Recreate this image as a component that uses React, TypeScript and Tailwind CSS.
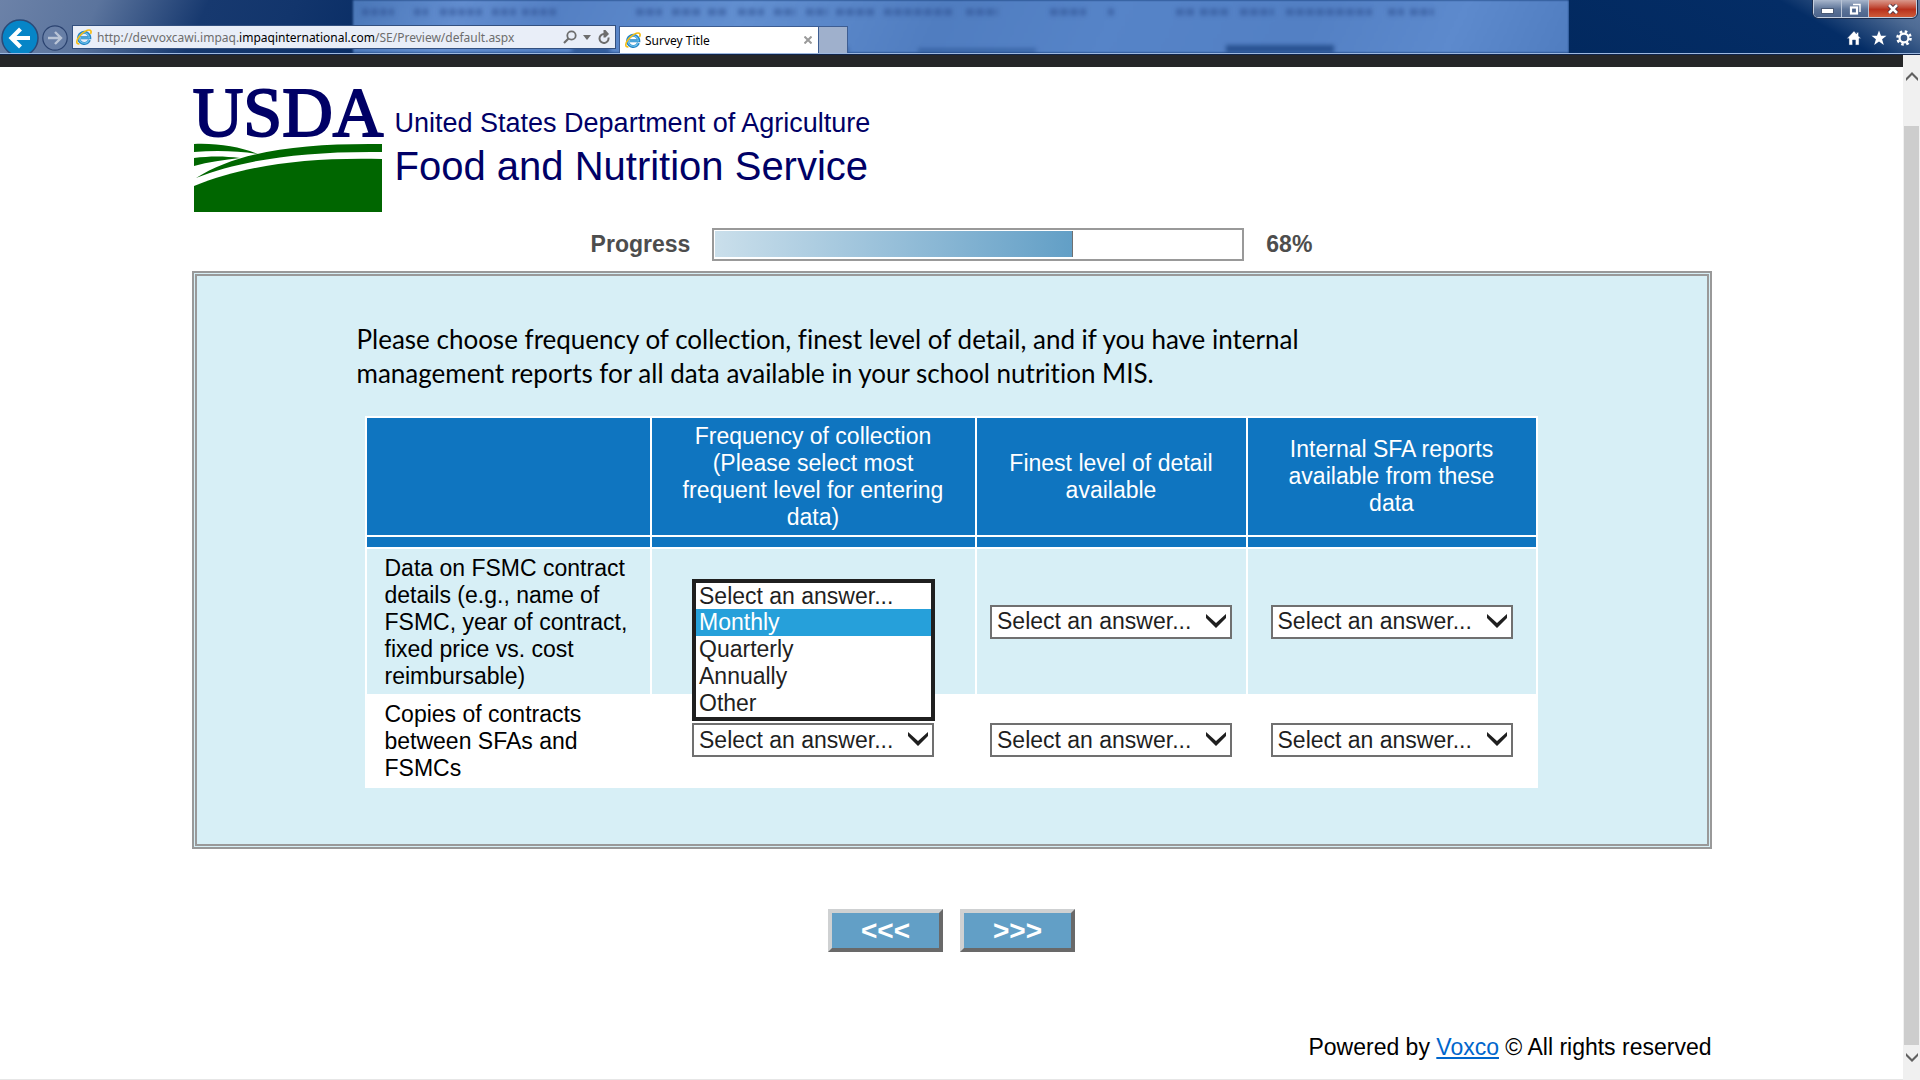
import { useState } from 'react';

const answers = ['Select an answer...', 'Monthly', 'Quarterly', 'Annually', 'Other'];

const columns = [
  'Frequency of collection (Please select most frequent level for entering data)',
  'Finest level of detail available',
  'Internal SFA reports available from these data',
];

const rows = [
  {
    label: 'Data on FSMC contract details (e.g., name of FSMC, year of contract, fixed price vs. cost reimbursable)',
    open: true,
  },
  { label: 'Copies of contracts between SFAs and FSMCs', open: false },
];

function IeIcon() {
  return (
    <svg viewBox="0 0 16 16" className="size-4 shrink-0" aria-hidden="true">
      <path d="M13.4 11a5.6 5.6 0 1 1 .4-2.200H4.600" fill="none" stroke="#2585c4" strokeWidth="3" />
      <path d="M13 11a5.200 5.200 0 1 1 .4-2H4.600" fill="none" stroke="#6ec3ee" strokeWidth="1.2" />
      <path
        d="M3.400 14.800C.2 15.400-.2 12 3 7.800 6.400 3 12 .2 14.200 1.200c1.200.6 1 2.200.3 3.600"
        fill="none"
        stroke="#f6bd12"
        strokeWidth="1.6"
      />
    </svg>
  );
}

// Desktop seen through the glass title bar
function GlassBackdrop() {
  return (
    <div className="absolute inset-0 overflow-hidden bg-[linear-gradient(115deg,#6c82a8_0,#5b749d_90px,#17396f_190px,#12356c_270px,#022760_420px)]">
      <div className="absolute inset-y-0 left-[18.4%] right-[18.3%] bg-[linear-gradient(115deg,#4a77b8_0%,#628dcf_9%,#5480c4_17%,#628fd0_32%,#507dc0_48%,#5684c8_62%,#5380c4_78%,#5d8acd_90%,#507dc0_100%)] blur-[1px]" />
      <div className="absolute inset-y-0 right-0 w-[18.3%] bg-[linear-gradient(30deg,#02295f_0%,#042d66_68%,#4e6b94_88%,#5f7ba3_100%)]" />
      <svg className="absolute inset-0 h-full w-full blur-[2px]" aria-hidden="true">
        <g stroke="#2c4f90" strokeWidth="7" opacity="0.5">
          <path d="M362 12h32M414 12h14M440 12h42M492 12h24M522 12h36" strokeDasharray="7 2" />
          <path d="M636 12h26M672 12h28M708 12h20M738 12h26M774 12h22M806 12h22M836 12h38M884 12h70M966 12h32" strokeDasharray="8 2" />
          <path d="M1050 12h36M1108 12h6M1176 12h18M1200 12h28M1240 12h34M1286 12h86M1388 12h16M1410 12h24" strokeDasharray="8 2" />
        </g>
        <g stroke="#173f7c" strokeWidth="7" opacity="0.7">
          <path d="M572 51h38M824 51h24" />
          <path d="M918 52h118" opacity="0.6" />
          <path d="M1226 50h108" strokeWidth="10" />
        </g>
      </svg>
    </div>
  );
}

function BrowserBar() {
  return (
    <header className="relative flex h-[54px] items-end border-b border-[#9db8e0]">
      <GlassBackdrop />
      <div className="relative flex h-full w-full items-end">
        <div className="flex h-full w-[619px] shrink-0 items-end overflow-hidden">
          <button aria-label="Back" className="-mb-1 ml-px size-[38px] shrink-0">
            <svg viewBox="0 0 38 38" className="size-full">
              <circle cx="19" cy="19" r="18" fill="#0685c7" stroke="#2b4a78" strokeWidth="1.5" />
              <path d="M29 19H12M19.500 10l-9 9 9 9" fill="none" stroke="#fff" strokeWidth="4.2" />
            </svg>
          </button>
          <button aria-label="Forward" className="mb-[2px] ml-[3px] size-[26px] shrink-0">
            <svg viewBox="0 0 26 26" className="size-full">
              <circle cx="13" cy="13" r="12.2" fill="#7f93b5" fillOpacity="0.3" stroke="#2b4370" strokeWidth="1.2" />
              <path d="M6 13h12M13 7l6 6-6 6" fill="none" stroke="#b9c4d6" strokeWidth="2.4" />
            </svg>
          </button>
          <form className="mb-1 ml-1 flex h-6 w-[544px] items-center border border-[#33507f] bg-[#e9eef8] pl-[3px] pr-1">
            <IeIcon />
            <div
              role="textbox"
              aria-label="Address"
              className="ml-[5px] flex-1 pt-[2px] font-['Noto_Sans','Segoe_UI',sans-serif] text-xs text-[#6d6d6d]"
            >
              http://devvoxcawi.impaq.<span className="text-black">impaqinternational.com</span>/SE/Preview/default.aspx
            </div>
            <button type="button" aria-label="Search">
              <svg viewBox="0 0 14 14" className="size-[14px]">
                <circle cx="8.5" cy="5.5" r="4.2" fill="none" stroke="#6d6d6d" strokeWidth="1.8" />
                <path d="M5.500 8.500 1 13" stroke="#6d6d6d" strokeWidth="2.2" />
              </svg>
            </button>
            <button type="button" aria-label="Search options" className="ml-[6px]">
              <svg viewBox="0 0 8 5" className="h-[5px] w-2">
                <path d="M0 0h8L4 5z" fill="#6d6d6d" />
              </svg>
            </button>
            <button type="button" aria-label="Refresh" className="ml-[6px]">
              <svg viewBox="0 0 14 14" className="size-[14px]">
                <path d="M11.400 7.500A4.500 4.500 0 1 1 7 4h1.500" fill="none" stroke="#6d6d6d" strokeWidth="2" />
                <path d="M6.500 0H8.500l3.500 4-3.500 3.500h-2z" fill="#6d6d6d" />
              </svg>
            </button>
          </form>
        </div>

        <div className="flex h-[27px] w-[200px] items-center border border-b-0 border-[#3d5d92] bg-white pl-[5px] pr-[6px]">
          <IeIcon />
          <span className="ml-1 flex-1 pt-px font-['Noto_Sans','Segoe_UI',sans-serif] text-xs text-black">Survey Title</span>
          <button aria-label="Close tab">
            <svg viewBox="0 0 8 8" className="size-2">
              <path d="M.5.5l7 7M7.500.5l-7 7" stroke="#9a9a9a" strokeWidth="2" />
            </svg>
          </button>
        </div>
        <button aria-label="New tab" className="h-[27px] w-[29px] border border-b-0 border-l-0 border-[#3d5d92] bg-[#9fb0cc]" />

        <div className="ml-auto flex h-full flex-col items-end justify-between pb-[7px]">
          <div className="mr-[3px] flex h-[18px] overflow-hidden rounded-b-[5px] border border-t-0 border-[#c5cfdf] outline outline-[#1c2f50]">
            <button
              aria-label="Minimize"
              className="flex w-[28px] items-end justify-center border-r border-[#b9c4d6] bg-linear-to-b from-[#a8b6cc] via-[#5c7397] via-55% to-[#4c648c] pb-1"
            >
              <span className="h-1 w-[11px] bg-white outline outline-[#4a5a76]" />
            </button>
            <button
              aria-label="Restore"
              className="flex w-[27px] items-center justify-center border-r border-[#b9c4d6] bg-linear-to-b from-[#a8b6cc] via-[#5c7397] via-55% to-[#4c648c]"
            >
              <svg viewBox="0 0 12 12" className="size-3">
                <path d="M4 1.500h7V9" fill="none" stroke="#fff" strokeWidth="1.4" />
                <rect x="2" y="4.5" width="6" height="6" fill="#4c648c" stroke="#fff" strokeWidth="2.2" />
              </svg>
            </button>
            <button
              aria-label="Close"
              className="flex w-[47px] items-center justify-center bg-linear-to-b from-[#d9988c] via-[#b8301c] via-55% to-[#cf5a38]"
            >
              <svg viewBox="0 0 12 10" className="h-[10px] w-3">
                <path d="M2 1l8 8M10 1L2 9" stroke="#4b3040" strokeWidth="4.4" />
                <path d="M2 1l8 8M10 1L2 9" stroke="#fff" strokeWidth="2.6" />
              </svg>
            </button>
          </div>
          <div className="mr-2 flex gap-[9px]">
            <button aria-label="Home">
              <svg viewBox="0 0 16 16" className="size-4">
                <path d="M8 1 1 8.500h2V15h3.500v-5h3v5H13V8.500h2L12.500 6V2.500h-2V4z" fill="#fff" stroke="#33507f" strokeWidth="0.5" />
              </svg>
            </button>
            <button aria-label="Favorites">
              <svg viewBox="0 0 16 16" className="size-4">
                <path d="M8 .5l2 5.200h5.500l-4.400 3.500 1.700 5.800L8 11.600 3.200 15l1.700-5.800L.5 5.700H6z" fill="#fff" />
              </svg>
            </button>
            <button aria-label="Tools">
              <svg viewBox="0 0 16 16" className="size-4">
                <circle cx="8" cy="8" r="6.5" fill="none" stroke="#fff" strokeWidth="2.6" strokeDasharray="2.55 2.55" />
                <circle cx="8" cy="8" r="4.4" fill="none" stroke="#fff" strokeWidth="2.2" />
              </svg>
            </button>
          </div>
        </div>
      </div>
    </header>
  );
}

function UsdaLogo() {
  return (
    <svg viewBox="0 0 192 136" className="h-[136px] w-[192px] shrink-0 overflow-visible" role="img" aria-label="USDA">
      <text
        x="96"
        y="58"
        textAnchor="middle"
        fill="#000066"
        stroke="#000066"
        strokeWidth="2"
        className="font-['Liberation_Serif','Times_New_Roman',serif] text-[70px]"
      >
        USDA
      </text>
      <path d="M2 66c24-1 46 3 64 10-18-3-42-4-64-2z" fill="#006600" />
      <path d="M2 80c16-2 30-2 46 0-16 2-32 4-46 8z" fill="#006600" />
      <path d="M4 100C46 73 110 65 190 66v8C110 73 50 82 4 100z" fill="#006600" />
      <path d="M2 108c48-20 110-29 188-27v53H2z" fill="#006600" />
    </svg>
  );
}

function AnswerSelect({ label }: { label: string }) {
  return (
    <div className="relative mx-auto w-[242px]">
      <select
        aria-label={label}
        className="block h-[34px] w-full appearance-none border-2 border-[#707070] bg-white pl-[5px] text-[23px] leading-[27px] text-[#1f1f1f]"
      >
        {answers.map((answer) => (
          <option key={answer}>{answer}</option>
        ))}
      </select>
      <svg viewBox="0 0 20 14" className="pointer-events-none absolute right-[6px] top-[9px] h-[14px] w-5" aria-hidden="true">
        <path d="M0 0l10 9L20 0v4L10 14 0 4z" fill="#1f1f1f" />
      </svg>
    </div>
  );
}

function OpenSelect({ label }: { label: string }) {
  const [selected, setSelected] = useState('Monthly');

  return (
    <div className="relative mx-auto h-[34px] w-[242px]">
      <ul
        role="listbox"
        aria-label={label}
        className="absolute -top-[26px] left-0 z-10 w-[243px] border-4 border-[#1f1f1f] bg-white text-left text-[#1f1f1f]"
      >
        {answers.map((answer) => (
          <li
            key={answer}
            role="option"
            aria-selected={answer === selected}
            onClick={() => setSelected(answer)}
            className={`pl-[3px] first:h-[26px] ${answer === selected ? 'bg-[#26a0da] text-white' : ''}`}
          >
            {answer}
          </li>
        ))}
      </ul>
    </div>
  );
}

function SurveyTable() {
  return (
    <table className="ml-[168px] w-[1173px] table-fixed border-separate border-spacing-x-[2px] border-spacing-y-0 border-y-2 border-white bg-white">
      <colgroup>
        <col className="w-[283px]" />
        <col className="w-[323px]" />
        <col className="w-[269px]" />
        <col />
      </colgroup>
      <thead>
        <tr className="h-[119px] text-white">
          <td className="border-b-2 border-white bg-[#0f75c0]" />
          {columns.map((column) => (
            <th key={column} scope="col" className="border-b-2 border-white bg-[#0f75c0] px-7 font-normal">
              {column}
            </th>
          ))}
        </tr>
        <tr className="h-3" aria-hidden="true">
          {[0, 1, 2, 3].map((i) => (
            <td key={i} className="border-b-2 border-white bg-[#0f75c0]" />
          ))}
        </tr>
      </thead>
      <tbody>
        {rows.map((row) => (
          <tr key={row.label} className="bg-[#d7eff6] even:bg-white even:h-[92px]">
            <th scope="row" className="pb-1 pl-[18px] pr-4 pt-[6px] text-left font-normal">
              {row.label}
            </th>
            {columns.map((column, i) => (
              <td key={column}>
                {row.open && i === 0 ? <OpenSelect label={column} /> : <AnswerSelect label={`${row.label}: ${column}`} />}
              </td>
            ))}
          </tr>
        ))}
      </tbody>
    </table>
  );
}

function Scrollbar() {
  return (
    <div className="flex w-[17px] shrink-0 flex-col items-center bg-[#f0f0f0]" aria-hidden="true">
      <svg viewBox="0 0 12 10" className="mt-4 h-[10px] w-3">
        <path d="M0 7l6-6 6 6v3L6 4l-6 6z" fill="#606060" />
      </svg>
      <div className="mt-[45px] w-[15px] flex-1 bg-[#cdcdcd]" />
      <svg viewBox="0 0 12 10" className="mb-[17px] mt-2 h-[10px] w-3">
        <path d="M0 3l6 6 6-6V0L6 6 0 0z" fill="#606060" />
      </svg>
    </div>
  );
}

export default function App() {
  const progress = 68;

  return (
    <div className="flex min-h-screen flex-col bg-white font-['Liberation_Sans',Arial,sans-serif] text-[23px] leading-[27px] text-black">
      <BrowserBar />
      <div className="flex flex-1 border-t border-[#10244a]">
        <div className="min-w-0 flex-1 border-b border-[#e6e6e6]">
          <div className="h-3 bg-[#252628]" />

          <main className="mx-auto w-[1520px] max-w-full">
            <div className="flex pt-[11px] text-[#000066]">
              <UsdaLogo />
              <div className="ml-[11px] pt-[30px]">
                <p className="text-[27px] leading-[30px]">United States Department of Agriculture</p>
                <p className="mt-[5px] text-[40px] leading-[46px]">Food and Nutrition Service</p>
              </div>
            </div>

            <div className="mt-[14px] flex items-center justify-center font-bold text-[#4d4d4d]">
              <span id="progress-label">Progress</span>
              <div
                role="progressbar"
                aria-labelledby="progress-label"
                aria-valuenow={progress}
                className="mx-[22px] h-[33px] w-[532px] border-2 border-[#999999] p-px"
              >
                <div
                  className="h-[26px] border-r border-[#707070] bg-linear-to-r from-[#cadfeb] to-[#629fc6]"
                  style={{ width: `${progress}%` }}
                />
              </div>
              <span>{progress}%</span>
            </div>

            <section className="mt-[10px] border-[5px] border-double border-[#999999] bg-[#d7eff6] pb-[56px] pt-[46px]">
              <p className="mb-[26px] ml-[160px] w-[1000px] font-[Lato,Carlito,Calibri,sans-serif] text-[26px] leading-[34px] [font-variant-ligatures:none]">
                Please choose frequency of collection, finest level of detail, and if you have internal management reports for all data
                available in your school nutrition MIS.
              </p>
              <SurveyTable />
            </section>

            <div className="mt-[60px] flex justify-center gap-[17px] text-[28px] font-bold leading-[30px] text-white">
              <button
                aria-label="Previous"
                className="h-[43px] w-[115px] border-4 border-b-[#696969] border-l-[#cfd1d2] border-r-[#696969] border-t-[#cfd1d2] bg-[#629fc6]"
              >
                &lt;&lt;&lt;
              </button>
              <button
                aria-label="Next"
                className="h-[43px] w-[115px] border-4 border-b-[#696969] border-l-[#cfd1d2] border-r-[#696969] border-t-[#cfd1d2] bg-[#629fc6]"
              >
                &gt;&gt;&gt;
              </button>
            </div>

            <footer className="mt-[82px] text-right">
              Powered by{' '}
              <a href="#" className="text-[#0066cc] underline">
                Voxco
              </a>{' '}
              © All rights reserved
            </footer>
          </main>
        </div>
        <Scrollbar />
      </div>
    </div>
  );
}
